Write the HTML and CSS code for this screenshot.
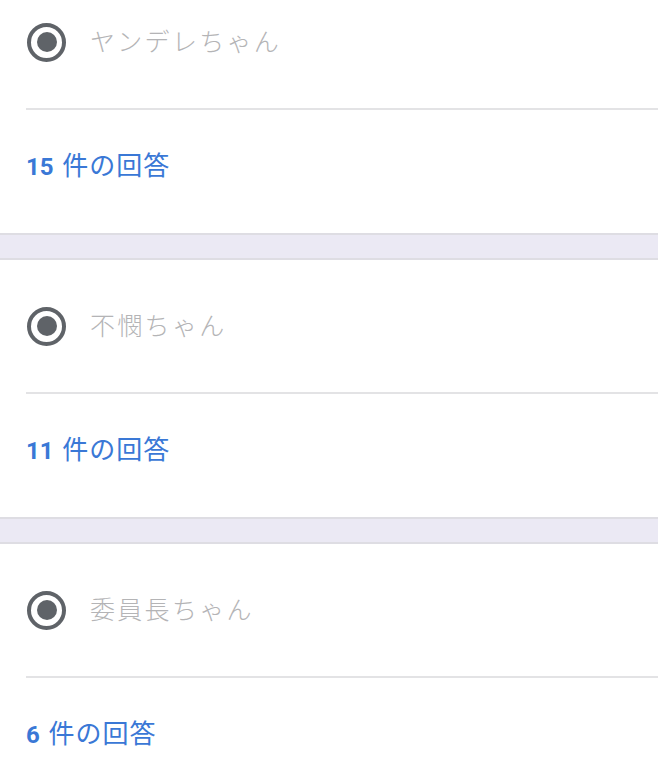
FILE: index.html
```html
<!DOCTYPE html>
<html lang="ja">
<head>
<meta charset="utf-8">
<link rel="stylesheet" href="styles.css">
</head>
<body>
<div class="list">
  <section class="card">
    <div class="option">
      <span class="radio"><span class="dot"></span></span>
      <span class="label">ヤンデレちゃん</span>
    </div>
    <div class="answers"><b class="num">15</b> 件の回答</div>
  </section>
  <div class="band"></div>
  <section class="card">
    <div class="option">
      <span class="radio"><span class="dot"></span></span>
      <span class="label">不憫ちゃん</span>
    </div>
    <div class="answers"><b class="num">11</b> 件の回答</div>
  </section>
  <div class="band"></div>
  <section class="card">
    <div class="option">
      <span class="radio"><span class="dot"></span></span>
      <span class="label">委員長ちゃん</span>
    </div>
    <div class="answers"><b class="num">6</b> 件の回答</div>
  </section>
</div>
</body>
</html>
```
FILE: styles.css
```css
html, body {
  margin: 0;
  padding: 0;
  background: #ffffff;
  overflow: hidden;
}
body {
  font-family: "Noto Sans CJK JP", "Noto Sans", sans-serif;
}
.list {
  margin-top: -24px;
}
.card {
  background: #ffffff;
  padding-left: 26px;
}
.option {
  height: 132px;
  display: flex;
  align-items: center;
  gap: 24px;
  border-bottom: 2px solid #e3e3e5;
  padding-left: 1px;
}
.radio {
  width: 39px;
  height: 39px;
  box-sizing: border-box;
  border: 4px solid #5f6368;
  border-radius: 50%;
  display: flex;
  align-items: center;
  justify-content: center;
  flex: none;
}
.dot {
  width: 20px;
  height: 20px;
  border-radius: 50%;
  background: #5f6368;
}
.label {
  font-size: 25px;
  font-weight: 300;
  letter-spacing: 2.3px;
  color: #b4b4b6;
  line-height: 30px;
  padding-bottom: 4px;
}
.answers {
  height: 123px;
  box-sizing: border-box;
  padding-top: 39px;
  font-size: 26px;
  line-height: 30px;
  letter-spacing: 1px;
  color: #3a78d6;
}
.num {
  font-family: "Roboto", "Noto Sans", sans-serif;
  font-weight: 700;
  font-size: 24px;
  letter-spacing: 0;
  margin-right: 2px;
}
.band {
  height: 23px;
  background: #ebe9f4;
  border-top: 2px solid #dedde3;
  border-bottom: 2px solid #dedde3;
}
```
